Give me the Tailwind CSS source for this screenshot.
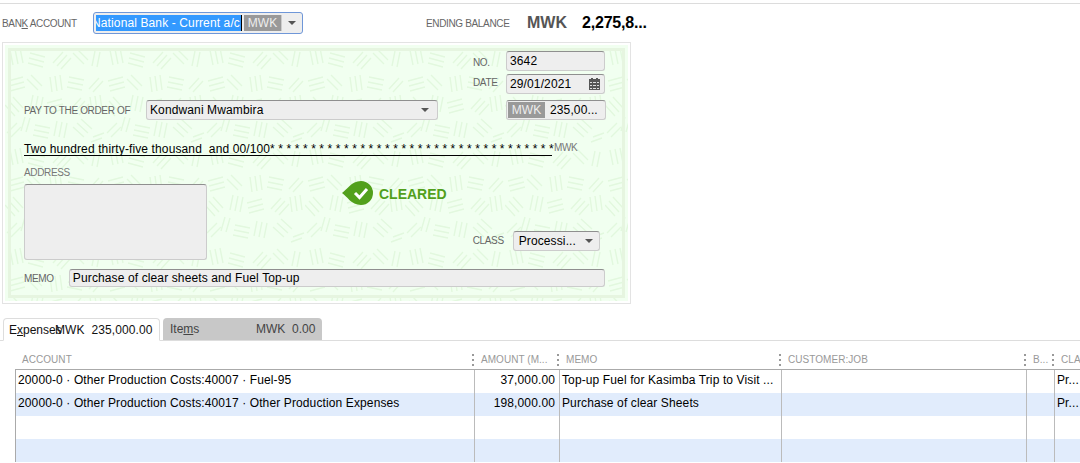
<!DOCTYPE html>
<html>
  <head>
    <meta charset="UTF-8" />
    <title>Write Cheques</title>
    <script src="https://cdn.jsdelivr.net/npm/@tailwindcss/browser@4"></script>
  </head>
  <body class="bg-white">
    <div class="w-[1080px] h-[463px] overflow-hidden font-['Liberation_Sans',Arial,sans-serif] text-[12px] tracking-[0.12px] text-black">
      <!-- top edge -->
      <div class="h-[4px] border-b border-[#dcdcdc]"></div>

      <!-- bank account row -->
      <div class="h-[38px] flex items-center pl-[2px]">
        <span class="w-[91px] text-[10px] tracking-[-0.35px] text-[#666]">BAN<u>K</u> ACCOUNT</span>
        <div class="w-[210px] h-[22px] flex border border-[#6f97d8] rounded-[3px] bg-[#eee] p-[2px] pr-0">
          <div class="w-[146px] flex justify-end items-center overflow-hidden bg-[#3399ff] text-white whitespace-nowrap pr-[1px] border-r border-black">National Bank - Current a/c</div>
          <div class="w-[37px] ml-[2px] flex items-center justify-center bg-[#999] text-[#eee]">MWK</div>
          <div class="flex-1 flex items-center justify-center border-l border-[#ccc]">
            <div class="w-0 h-0 border-x-[4px] border-x-transparent border-t-[4px] border-t-[#555]"></div>
          </div>
        </div>
        <span class="ml-[123px] w-[101px] text-[10px] tracking-[-0.35px] text-[#666]">ENDING BALANCE</span>
        <span class="w-[55px] text-[16px] tracking-normal font-bold text-[#555]">MWK</span>
        <span class="text-[16px] tracking-[-0.2px] font-bold">2,275,8...</span>
      </div>

      <!-- cheque -->
      <div class="ml-[2px] w-[629px] h-[262px] border border-[#e3e3e3] p-[2px]">
        <div class="relative h-full bg-[#f1fff0] overflow-hidden">
          <svg class="absolute inset-0 w-full h-full" xmlns="http://www.w3.org/2000/svg">
            <defs>
              <pattern id="guilloche" width="100" height="100" patternUnits="userSpaceOnUse">
                <g stroke="#e2f8de" stroke-width="1.4" fill="none">
                  <path d="M5 5l3 15M10 4l3 15M15 3l3 15" />
                  <path d="M25 8l15 4M24 13l15 4M23 18l15 4" />
                  <path d="M48 18l10-11M52 21l10-11M56 24l10-11" />
                  <path d="M72 4l11 11M68 8l11 11" />
                  <path d="M90 6l-3 15M95 7l-3 15" />
                  <path d="M3 36l15-4M4 41l15-4M5 46l15-4" />
                  <path d="M26 30l11 11M22 34l11 11" />
                  <path d="M45 32l2 15M50 31l2 15M55 30l2 15" />
                  <path d="M64 32l15 3M63 37l15 3M62 42l15 3" />
                  <path d="M84 44l10-11M88 47l10-11" />
                  <path d="M8 52l10 11M4 56l10 11M0 60l10 11" />
                  <path d="M28 50l-3 15M33 51l-3 15M38 52l-3 15" />
                  <path d="M42 58l15-4M43 63l15-4M44 68l15-4" />
                  <path d="M66 64l10-11M70 67l10-11M74 70l10-11" />
                  <path d="M85 52l2 15M90 51l2 15M95 50l2 15" />
                  <path d="M20 72l-4 14M25 73l-4 14" />
                  <path d="M30 80l15 3M29 85l15 3M28 90l15 3" />
                  <path d="M52 76l-3 15M57 77l-3 15M62 78l-3 15" />
                  <path d="M68 82l11 10M72 78l11 10M76 74l11 10" />
                  <path d="M2 88l10-10M6 92l10-10" />
                  <path d="M88 92l11-4M86 97l11-4" />
                </g>
              </pattern>
            </defs>
            <rect width="100%" height="100%" fill="url(#guilloche)" />
          </svg>
          <div class="absolute inset-[3px] border-[3px] border-[#e6f5e0]"></div>

          <div class="relative pl-[19px] pr-[23px] pt-[6px]">
            <div class="flex justify-end items-center h-[20px]">
              <span class="w-[33px] mt-[3px] text-[10px] tracking-[-0.35px] text-[#666]">NO.</span>
              <div class="w-[99px] h-[20px] flex items-center pl-[3px] bg-[#eee] border border-[#ccc] border-t-[#8f8f8f] rounded-[3px]">3642</div>
            </div>
            <div class="flex justify-end items-center h-[20px] mt-[3px]">
              <span class="w-[33px] -mt-[3px] text-[10px] tracking-[-0.35px] text-[#666]">DATE</span>
              <div class="w-[99px] h-[20px] flex items-center justify-between pl-[3px] pr-[4px] bg-[#eee] border border-[#ccc] border-t-[#8f8f8f] rounded-[3px]">
                29/01/2021
                <svg class="w-[11px] h-[12px]" viewBox="0 0 11 12" xmlns="http://www.w3.org/2000/svg">
                  <path fill="#555" d="M0 1h2V0h2v1h3V0h2v1h2v11H0z" />
                  <path fill="#ddd" d="M1 4h2v1H1zM4 4h3v1H4zM8 4h2v1H8zM1 7h2v1H1zM4 7h3v1H4zM8 7h2v1H8zM1 10h2v1H1zM4 10h3v1H4zM8 10h2v1H8z" />
                </svg>
              </div>
            </div>
            <div class="flex items-center h-[20px] mt-[6px]">
              <span class="w-[122px] text-[10px] tracking-[-0.35px] text-[#666]">PAY TO THE ORDER OF</span>
              <div class="w-[292px] h-[20px] flex items-center justify-between pl-[3px] pr-[8px] bg-[#eee] border border-[#ccc] border-t-[#8f8f8f] rounded-[3px]">
                Kondwani Mwambira
                <div class="w-0 h-0 border-x-[4px] border-x-transparent border-t-[4px] border-t-[#555]"></div>
              </div>
              <div class="ml-auto -mr-[1px] w-[100px] h-[20px] flex items-center bg-[#eee] border border-[#ccc] border-t-[#8f8f8f] rounded-[3px] p-[1px]">
                <div class="w-[37px] h-full flex items-center justify-center bg-[#999] text-[#eee]">MWK</div>
                <span class="ml-[5px]">235,00...</span>
              </div>
            </div>

            <!-- amount in words -->
            <div class="flex mt-[20px] h-[16px]">
              <div class="w-[528px] shrink-0 border-b border-black whitespace-pre leading-[19px]">Two hundred thirty-five thousand  and 00/100*<span class="tracking-[0.1px]"> * * * * * * * * * * * * * * * * * * * * * * * * * * * * * * * * * *</span></div>
              <span class="ml-[2px] text-[10px] tracking-[-0.35px] text-[#777] leading-[15px]">MWK</span>
            </div>

            <div class="flex">
              <div class="w-[183px]">
                <div class="mt-[11px] h-[12px] leading-[12px] text-[10px] tracking-[-0.35px] text-[#777]">ADDRESS</div>
                <div class="mt-[5px] h-[76px] bg-[#eee] border border-[#ccc] border-t-[#8f8f8f] rounded-[3px]"></div>
              </div>
              <div class="ml-[135px] mt-[25px] h-[24px] flex items-center">
                <svg class="w-[31px] h-[24px]" viewBox="0 0 31 24" xmlns="http://www.w3.org/2000/svg">
                  <path fill="#52a01c" d="M0 12C5 9 9 0 19 0a12 12 0 0 1 0 24C9 24 5 15 0 12z" />
                  <path fill="none" stroke="#fff" stroke-width="3" d="M13 12l4.500 4.500L25 8" />
                </svg>
                <span class="ml-[6px] mt-[2px] text-[14px] tracking-normal font-bold text-[#52a01c]">CLEARED</span>
              </div>
              <div class="ml-[26px] mt-[75px] h-[20px] flex items-center">
                <span class="w-[40px] -mt-[2px] text-[10px] tracking-[-0.35px] text-[#666]">CLASS</span>
                <div class="w-[87px] h-[20px] flex items-center justify-between pl-[5px] pr-[6px] bg-[#eee] border border-[#ccc] border-t-[#8f8f8f] rounded-[3px]">
                  Processi...
                  <div class="w-0 h-0 border-x-[4px] border-x-transparent border-t-[4px] border-t-[#555]"></div>
                </div>
              </div>
            </div>

            <div class="flex items-center mt-[9px]">
              <span class="w-[45px] text-[10px] tracking-[-0.35px] text-[#666]">MEMO</span>
              <div class="w-[538px] h-[18px] flex items-center pl-[3px] bg-[#eee] border border-[#ccc] border-t-[#8f8f8f] rounded-[3px]">Purchase of clear sheets and Fuel Top-up</div>
            </div>
          </div>
        </div>
      </div>

      <!-- tabs -->
      <div class="mt-[14px] h-[23px] flex items-end pl-[3px] border-b border-[#ddd] tracking-normal">
        <div class="w-[157px] h-[23px] -mb-px pl-[5px] flex items-center whitespace-nowrap bg-white border border-[#ddd] border-b-white rounded-t-[4px] text-[#111]">
          <span class="w-[46px] shrink-0">E<u>x</u>penses</span>
          <span class="tracking-[0.1px]">MWK&nbsp; 235,000.00</span>
        </div>
        <div class="ml-[3px] w-[159px] h-[22px] pl-[7px] flex items-center whitespace-nowrap bg-[#c8c8c8] rounded-t-[4px] text-[#444]">
          <span class="w-[86px] shrink-0">Ite<u>m</u>s</span>
          <span>MWK&nbsp; 0.00</span>
        </div>
      </div>

      <!-- expense grid -->
      <div class="pl-[15px]">
        <div class="mt-[9px] h-[20px] grid grid-cols-[460px_85px_222px_245px_28px_1fr] items-center text-[10px] tracking-[0.05px] text-[#999] border-b border-[#aaa] whitespace-nowrap">
          <div class="flex items-center justify-between pl-[7px] pr-[1px]">ACCOUNT
            <svg class="w-[2px] h-[12px]" viewBox="0 0 2 12" xmlns="http://www.w3.org/2000/svg"><path fill="#999" d="M0 0h2v2H0zM0 5h2v2H0zM0 10h2v2H0z" /></svg>
          </div>
          <div class="flex items-center justify-between pl-[6px] pr-[1px]">AMOUNT (M...
            <svg class="w-[2px] h-[12px]" viewBox="0 0 2 12" xmlns="http://www.w3.org/2000/svg"><path fill="#999" d="M0 0h2v2H0zM0 5h2v2H0zM0 10h2v2H0z" /></svg>
          </div>
          <div class="flex items-center justify-between pl-[6px] pr-[1px]">MEMO
            <svg class="w-[2px] h-[12px]" viewBox="0 0 2 12" xmlns="http://www.w3.org/2000/svg"><path fill="#999" d="M0 0h2v2H0zM0 5h2v2H0zM0 10h2v2H0z" /></svg>
          </div>
          <div class="flex items-center justify-between pl-[6px] pr-[1px]">CUSTOMER:JOB
            <svg class="w-[2px] h-[12px]" viewBox="0 0 2 12" xmlns="http://www.w3.org/2000/svg"><path fill="#999" d="M0 0h2v2H0zM0 5h2v2H0zM0 10h2v2H0z" /></svg>
          </div>
          <div class="flex items-center justify-between pl-[6px] pr-[1px]">B...
            <svg class="w-[2px] h-[12px]" viewBox="0 0 2 12" xmlns="http://www.w3.org/2000/svg"><path fill="#999" d="M0 0h2v2H0zM0 5h2v2H0zM0 10h2v2H0z" /></svg>
          </div>
          <div class="pl-[6px] overflow-hidden">CLA</div>
        </div>

        <div class="border-l border-[#aaa] whitespace-nowrap">
          <div class="h-[23px] grid grid-cols-[459px_85px_222px_245px_28px_1fr] items-stretch leading-[21px]">
            <div class="pl-[2px] border-r border-[#bbb]">20000-0 · Other Production Costs:40007 · Fuel-95</div>
            <div class="pr-[4px] text-right border-r border-[#bbb]">37,000.00</div>
            <div class="pl-[2px] border-r border-[#bbb]">Top-up Fuel for Kasimba Trip to Visit ...</div>
            <div class="border-r border-[#bbb]"></div>
            <div class="border-r border-[#bbb]"></div>
            <div class="pl-[2px]">Pr...</div>
          </div>
          <div class="h-[23px] grid grid-cols-[459px_85px_222px_245px_28px_1fr] items-stretch leading-[21px] bg-[#e1ecfc]">
            <div class="pl-[2px] border-r border-[#bbb]">20000-0 · Other Production Costs:40017 · Other Production Expenses</div>
            <div class="pr-[4px] text-right border-r border-[#bbb]">198,000.00</div>
            <div class="pl-[2px] border-r border-[#bbb]">Purchase of clear Sheets</div>
            <div class="border-r border-[#bbb]"></div>
            <div class="border-r border-[#bbb]"></div>
            <div class="pl-[2px]">Pr...</div>
          </div>
          <div class="h-[23px] grid grid-cols-[459px_85px_222px_245px_28px_1fr]">
            <div class="border-r border-[#bbb]"></div>
            <div class="border-r border-[#bbb]"></div>
            <div class="border-r border-[#bbb]"></div>
            <div class="border-r border-[#bbb]"></div>
            <div class="border-r border-[#bbb]"></div>
            <div></div>
          </div>
          <div class="h-[23px] grid grid-cols-[459px_85px_222px_245px_28px_1fr] bg-[#e1ecfc]">
            <div class="border-r border-[#bbb]"></div>
            <div class="border-r border-[#bbb]"></div>
            <div class="border-r border-[#bbb]"></div>
            <div class="border-r border-[#bbb]"></div>
            <div class="border-r border-[#bbb]"></div>
            <div></div>
          </div>
        </div>
      </div>
    </div>
  </body>
</html>
